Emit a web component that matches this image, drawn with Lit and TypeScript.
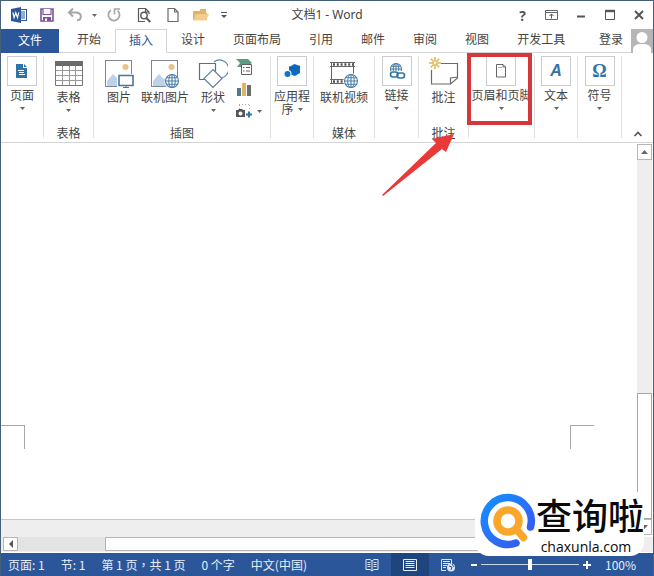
import { LitElement, html, css, svg, nothing, TemplateResult } from "lit";
import { customElement } from "lit/decorators.js";
import { classMap } from "lit/directives/class-map.js";

const draw = (w: number, h: number, body: TemplateResult) =>
  html`<svg width=${w} height=${h} viewBox="0 0 ${w} ${h}" fill="none" aria-hidden="true">${body}</svg>`;

const caret = html`<svg class="caret" width="5" height="3" viewBox="0 0 5 3" aria-hidden="true"><path d="M0 0h5L2.5 3z" fill="#666" /></svg>`;

const globe = (cx: number, cy: number, r: number) => svg`
  <g stroke="#4d7ea5" stroke-width="1.1">
    <circle cx=${cx} cy=${cy} r=${r} fill="#fff" />
    <ellipse cx=${cx} cy=${cy} rx=${r / 2} ry=${r} />
    <path d="M${cx} ${cy - r}v${2 * r}M${cx - r} ${cy}h${2 * r}M${cx - r * 0.85} ${cy - r / 2}h${r * 1.7}M${cx - r * 0.85} ${cy + r / 2}h${r * 1.7}" />
  </g>`;

const photo = svg`
  <rect x="1.5" y="4.5" width="26" height="26" fill="#fff" stroke="#7d8791" />
  <circle cx="21.500" cy="11" r="3" fill="#eac282" />
  <path d="M3 30V25l6-7 5 5 3-2v9z" fill="#bdd2e8" />`;

const icons = {
  word: draw(18, 18, svg`
    <rect x="9.500" y="3.500" width="7" height="11" fill="#fff" stroke="#2b579a" />
    <path d="M10 6h5M10 8h5M10 10h5M10 12h5" stroke="#2b579a" />
    <path d="M1 3l10-2v16L1 15z" fill="#2b579a" />
    <path d="M2.800 6.300l1.300 5.400 1.700-5 1.700 5 1.300-5.400" stroke="#fff" stroke-width="1.200" />`),
  save: draw(16, 16, svg`
    <path d="M2 2h12v12H2z" stroke="#7e539b" stroke-width="1.600" />
    <path d="M4 2v5.500h8V2" stroke="#7e539b" stroke-width="1.200" fill="#fff" />
    <path d="M4 10h8v4H4z" fill="#7e539b" /><path d="M6 11.500h2V14H6z" fill="#fff" />`),
  undo: draw(18, 16, svg`
    <path d="M7 1.500L3 5.500l4 4M3.500 5.500H10c6 0 6.500 7 1 8" stroke="#a6a6a6" stroke-width="2" />`),
  redo: draw(16, 16, svg`
    <path d="M11.500 3.600A5.600 5.600 0 1 1 5 3.200" stroke="#a6a6a6" stroke-width="1.800" />
    <path d="M8.500 7.500V2h5.500" stroke="#a6a6a6" stroke-width="1.600" />`),
  preview: draw(16, 18, svg`
    <path d="M9 15.500H2.500v-13h7l3.500 3.500v2M9.500 2.500V6H13" stroke="#595959" stroke-width="1.200" />
    <circle cx="8" cy="9.500" r="3.200" stroke="#595959" stroke-width="1.400" />
    <path d="M10.300 12l4 4" stroke="#595959" stroke-width="2" />`),
  blank: draw(14, 16, svg`<path d="M2 1.500h6.500L12 5v9.500H2zM8.500 1.500V5H12" stroke="#6a6a6a" stroke-width="1.200" />`),
  folder: draw(18, 16, svg`
    <path d="M1 13V4h7V2h6v4h1v7z" fill="#e2b368" /><path d="M1 13.500L4 7h13l-3 6.500z" fill="#f3cd8b" />`),
  more: draw(8, 8, svg`<path d="M1 1.500h6" stroke="#555" /><path d="M1 4h6L4 7z" fill="#555" />`),
  ribbonMode: draw(14, 12, svg`
    <path d="M.5 1.500h12v9H.5zM.5 3.500h12" stroke="#666" /><path d="M6.500 9.500V5M4.500 7l2-2 2 2" stroke="#555" />`),
  min: draw(12, 12, svg`<path d="M2 7.500h8" stroke="#555" stroke-width="2" />`),
  max: draw(12, 12, svg`<path d="M1.500 2v8.500h9V2" stroke="#555" /><path d="M1 2h10" stroke="#555" stroke-width="2.400" />`),
  close: draw(12, 12, svg`<path d="M2 2l8 8M10 2l-8 8" stroke="#555" stroke-width="2" />`),
  person: draw(22, 24, svg`
    <path d="M0 0h22v24H0z" fill="#b6b6b8" /><circle cx="11" cy="8.500" r="5.500" fill="#fff" />
    <path d="M2 24v-3c0-5 4-6 9-6s9 1 9 6v3z" fill="#fff" />`),
  page: draw(12, 16, svg`
    <path d="M0 1h7v4h4v10H0z" fill="#2f74a8" /><path d="M8 1l3 3H8z" fill="#2f74a8" />
    <path d="M2 7.500h6M3 11.500h6" stroke="#fff" /><path d="M3 9.500h5" stroke="#fff" />`),
  table: draw(30, 32, svg`
    <path d="M1.500 6.500h27v23h-27z" fill="#fff" stroke="#777" /><path d="M1 5h28v5H1z" fill="#6b6b6b" />
    <path d="M2 14.500h26M2 19.500h26M2 24.500h26M8.500 10v19M15.500 10v19M21.500 10v19" stroke="#9a9a9a" />`),
  picture: draw(30, 32, svg`${photo}
    <path d="M13 18h17v14H13z" fill="#fff" />
    <path d="M15 19.500h14v10H15z" fill="#fff" stroke="#47779f" stroke-width="1.600" /><path d="M22 29v2M19 31.500h6" stroke="#47779f" />`),
  online: draw(30, 32, svg`${photo}<circle cx="22" cy="26" r="7.500" fill="#fff" />${globe(22, 25, 6.5)}`),
  shapes: draw(30, 32, svg`
    <path d="M16 6A9 9 0 1 1 22 22" stroke="#5b87ab" stroke-width="1.200" />
    <path d="M1.500 7.500h16v16h-16z" fill="#fff" stroke="#47779f" stroke-width="1.200" />
    <path d="M15 13.500l9 9-9 9-9-9z" fill="#fff" stroke="#6b8299" stroke-width="1.200" />`),
  smartart: draw(18, 18, svg`
    <path d="M1 1h12l4 4-3 2H7v2H2l3-4z" fill="#5c9c80" />
    <path d="M6.500 6.500h10v10h-10z" fill="#fff" stroke="#606060" /><path d="M8 9.500h1.500M8 13h1.500M11 9.500h4M11 13h4" stroke="#606060" />`),
  chart: draw(18, 16, svg`
    <path d="M2 7h4v8H2z" fill="#4c7896" /><path d="M7 2h4v13H7z" fill="#e2b161" /><path d="M12 4h4v11h-4z" fill="#6d6d6d" />`),
  screenshot: draw(18, 16, svg`
    <path d="M4 1.500h11M4.500 2v4M14.500 2v5" stroke="#aaa" stroke-dasharray="1 2" />
    <path d="M1 7h2l1-1h3l1 1h2v7H1z" fill="#555" /><circle cx="5.500" cy="10.500" r="2" fill="#fff" />
    <path d="M11 11.500h6M14 8.500v6" stroke="#2f74a8" stroke-width="2" />`),
  apps: draw(18, 16, svg`
    <path d="M6 4l5.500-3L17 3v7l-5 3-6-2z" fill="#0f6cbd" /><path d="M6 4l6 2 5-3" stroke="#0a5aa5" />
    <circle cx="4.500" cy="11" r="4" fill="#fff" /><circle cx="4.500" cy="11" r="3" fill="#1273c8" />`),
  video: draw(30, 32, svg`
    <path d="M2.500 6v22M24.500 6v12M1 10.500h25M1 23.500h14" stroke="#666" />
    <path d="M1 6.500h25M1 27.500h14" stroke="#666" /><path d="M4 8.500h21M4 25.500h12" stroke="#555" stroke-width="2.400" stroke-dasharray="2 1.800" />
    <circle cx="22" cy="25" r="7.800" fill="#fff" />${globe(22, 25, 6.5)}`),
  link: draw(18, 18, svg`${globe(8, 7, 5.5)}
    <path d="M3 9h14v8H3z" fill="#fff" />
    <rect x="2.500" y="10" width="7.500" height="5" rx="2.500" stroke="#2f74a8" stroke-width="1.600" />
    <rect x="9" y="11" width="7.500" height="5" rx="2.500" stroke="#2f74a8" stroke-width="1.600" />`),
  comment: draw(32, 32, svg`
    <path d="M13 7.500h16.500V22l-7 6H3.500V14" stroke="#6b6b6b" stroke-width="1.200" />
    <path d="M29.500 21l-7 1v6" stroke="#6b6b6b" stroke-width="1.200" />
    <path d="M7 1v4M7 9v4M1 7h4M9 7h4M2.800 2.800l2.500 2.500M8.700 8.700l2.500 2.500M11.200 2.800L8.700 5.300M5.300 8.700l-2.500 2.500" stroke="#dfb752" stroke-width="1.500" />
    <circle cx="7" cy="7" r="2" stroke="#dfb752" stroke-width="1.200" />`),
  header: draw(12, 16, svg`
    <path d="M1.500 1.500H8L10.500 4v10h-9zM8 1.500V4h2.500" stroke="#666" fill="#fff" /><path d="M3 4.500h4" stroke="#d9a54c" />`),
  read: draw(14, 14, svg`
    <path d="M7 3L5 1.500H1v10h4L7 13l2-1.500h4v-10H9zM7 3v10" stroke="#dce6f4" />
    <path d="M2.500 4.500h3M2.500 6.500h3M2.500 8.500h3M8.500 4.500h3M8.500 6.500h3M8.500 8.500h3" stroke="#dce6f4" />`),
  print: draw(14, 14, svg`
    <path d="M.5 1.500h13v11H.5z" stroke="#e6eef8" /><path d="M2.500 3.500h9M2.500 5.500h9M2.500 7.500h9M2.500 9.500h9" stroke="#e6eef8" />`),
  web: draw(16, 14, svg`
    <path d="M6 12.500H1.500v-11h10V6M3 3.500h7M3 5.500h7M3 7.500h4M3 9.500h3" stroke="#dce6f4" />
    <circle cx="11" cy="9.500" r="4" fill="#dce6f4" /><path d="M9 8l3 1-1 3M12 6l2 3" stroke="#2b579a" />`),
  collapse: draw(10, 8, svg`<path d="M1.500 6L5 2.500 8.500 6" stroke="#555" stroke-width="1.600" />`),
};

interface Cmd {
  label: string;
  icon: TemplateResult;
  boxed?: boolean;
  arrow?: boolean;
  size?: string;
}
interface Group {
  name?: string;
  size: string;
  cmds: Cmd[];
  small?: { label: string; icon: TemplateResult; arrow?: boolean }[];
  mark?: boolean;
}

const groups: Group[] = [
  { size: "w43", cmds: [{ label: "页面", icon: icons.page, boxed: true, arrow: true }] },
  { size: "w50", name: "表格", cmds: [{ label: "表格", icon: icons.table, arrow: true }] },
  {
    size: "w177",
    name: "插图",
    cmds: [
      { label: "图片", icon: icons.picture, size: "c40" },
      { label: "联机图片", icon: icons.online, size: "c52" },
      { label: "形状", icon: icons.shapes, arrow: true, size: "c44" },
    ],
    small: [
      { label: "SmartArt", icon: icons.smartart },
      { label: "图表", icon: icons.chart },
      { label: "屏幕截图", icon: icons.screenshot, arrow: true },
    ],
  },
  { size: "w43", cmds: [{ label: "应用程序", icon: icons.apps, boxed: true, arrow: true, size: "wrap" }] },
  { size: "w61", name: "媒体", cmds: [{ label: "联机视频", icon: icons.video }] },
  { size: "w44", cmds: [{ label: "链接", icon: icons.link, boxed: true, arrow: true }] },
  { size: "w50", name: "批注", cmds: [{ label: "批注", icon: icons.comment }] },
  { size: "w66", mark: true, cmds: [{ label: "页眉和页脚", icon: icons.header, boxed: true, arrow: true }] },
  { size: "w43", cmds: [{ label: "文本", icon: html`<i class="glyph">A</i>`, boxed: true, arrow: true }] },
  { size: "w44", cmds: [{ label: "符号", icon: html`<b class="glyph omega">Ω</b>`, boxed: true, arrow: true }] },
];

const reset = css`
  :host, * { box-sizing: border-box; }
  button {
    border: 0;
    padding: 0;
    margin: 0;
    background: none;
    font: inherit;
    color: inherit;
    display: flex;
    align-items: center;
    justify-content: center;
  }
  svg { display: block; flex: none; }
`;

@customElement("word-titlebar")
class WordTitlebar extends LitElement {
  static styles = [reset, css`
    :host { display: grid; grid-template-columns: 1fr auto 1fr; height: 28px; align-items: center; color: #444; }
    .bar { display: flex; align-items: center; }
    .bar button { width: 28px; height: 26px; }
    .quick { padding-left: 4px; }
    .quick .narrow { width: 10px; }
    .quick .wide { width: 30px; }
    .quick .end { width: 18px; }
    .win { justify-content: flex-end; }
    .win button { width: 29px; }
    .help { font: bold 14px "Open Sans", sans-serif; color: #555; }
    .title { margin: 0; font-size: 12px; font-weight: 400; font-family: "Noto Sans", "Noto Sans CJK SC", sans-serif; }
  `];
  render() {
    return html`
      <div class="bar quick">
        <button aria-label="Word">${icons.word}</button>
        <button aria-label="保存">${icons.save}</button>
        <button aria-label="撤消">${icons.undo}</button>
        <button class="narrow" aria-label="撤消列表">${caret}</button>
        <button class="wide" aria-label="重复">${icons.redo}</button>
        <button class="wide" aria-label="打印预览">${icons.preview}</button>
        <button aria-label="新建">${icons.blank}</button>
        <button aria-label="打开">${icons.folder}</button>
        <button class="end" aria-label="自定义">${icons.more}</button>
      </div>
      <h1 class="title">文档1 - Word</h1>
      <div class="bar win">
        <button class="help" aria-label="帮助">?</button>
        <button aria-label="功能区显示选项">${icons.ribbonMode}</button>
        <button aria-label="最小化">${icons.min}</button>
        <button aria-label="最大化">${icons.max}</button>
        <button aria-label="关闭">${icons.close}</button>
      </div>`;
  }
}

@customElement("word-tabs")
class WordTabs extends LitElement {
  static styles = [reset, css`
    :host { display: flex; height: 24px; color: #444; border-bottom: 1px solid #d4d4d4; }
    .tab { padding: 0 14px 4px; height: 24px; white-space: nowrap; }
    .file { width: 58px; margin-right: 4px; background: #2b579a; color: #fff; padding-bottom: 2px; }
    .active { padding: 0 13px 4px; border: 1px solid #d4d4d4; border-bottom: 0; background: #fff; color: #2b579a; }
    .gap { flex: 1; }
    .login { padding-right: 8px; }
    .face { width: 22px; height: 24px; }
  `];
  render() {
    const tabs = ["开始", "插入", "设计", "页面布局", "引用", "邮件", "审阅", "视图", "开发工具"];
    return html`
      <button class="tab file">文件</button>
      ${tabs.map((t) => html`<button class=${classMap({ tab: true, active: t === "插入" })}>${t}</button>`)}
      <span class="gap"></span>
      <button class="tab login">登录</button>
      <button class="face" aria-label="帐户">${icons.person}</button>`;
  }
}

@customElement("word-ribbon")
class WordRibbon extends LitElement {
  static styles = [reset, css`
    :host { display: flex; height: 90px; padding: 3px 0 4px; color: #444; border-bottom: 1px solid #d4d4d4; background: #fff; }
    .group { position: relative; flex: none; display: flex; flex-direction: column; border-right: 1px solid #e1e1e1; }
    .w43 { width: 43px; }
    .w44 { width: 44px; }
    .w50 { width: 50px; }
    .w61 { width: 61px; }
    .w66 { width: 66px; }
    .w177 { width: 177px; }
    .row { display: flex; justify-content: center; flex: 1; }
    .w177 .row { justify-content: flex-start; padding-left: 5px; }
    .name { height: 16px; line-height: 16px; text-align: center; margin: 0 0 -3px; font-size: 12px; font-weight: 400; }
    .cmd { flex-direction: column; justify-content: flex-start; line-height: 16px; white-space: nowrap; height: 62px; }
    .label { margin-top: 1px; }
    .cmd .caret { margin-top: 4px; }
    .c40 { width: 40px; }
    .c52 { width: 52px; }
    .c44 { width: 44px; }
    .box { width: 30px; height: 30px; border: 1px solid #c9ced4; display: flex; align-items: center; justify-content: center; flex: none; }
    .wrap .label { width: 36px; white-space: normal; line-height: 13px; margin-top: 3px; }
    .wrap .caret { display: inline-block; margin: 0 0 3px 4px; }
    .minis { display: flex; flex-direction: column; }
    .mini { height: 22px; width: 30px; justify-content: flex-start; gap: 4px; }
    .glyph { font: italic bold 16px "Liberation Sans", sans-serif; color: #2f74a8; }
    .omega { font: bold 18px "Liberation Serif", serif; }
    .tail { flex: 1; display: flex; align-items: flex-end; justify-content: center; }
    .frame { position: absolute; left: -2px; top: -3px; width: 65px; height: 72px; border: 4px solid #d5373d; pointer-events: none; }
    .pointer { position: absolute; left: -88px; top: 76px; z-index: 2; pointer-events: none; }
  `];
  cmd(c: Cmd) {
    const wrap = c.size === "wrap";
    return html`<button class="cmd ${c.size ?? ""}">
      ${c.boxed ? html`<span class="box">${c.icon}</span>` : c.icon}
      <span class="label">${c.label}${wrap ? caret : nothing}</span>
      ${c.arrow && !wrap ? caret : nothing}
    </button>`;
  }
  render() {
    return html`
      ${groups.map((g) => html`
        <section class="group ${g.size}">
          <div class="row">
            ${g.cmds.map((c) => this.cmd(c))}
            ${g.small
              ? html`<div class="minis">${g.small.map((s) => html`<button class="mini" aria-label=${s.label}>${s.icon}${s.arrow ? caret : nothing}</button>`)}</div>`
              : nothing}
          </div>
          ${g.name ? html`<h2 class="name">${g.name}</h2>` : nothing}
          ${g.mark
            ? html`<div class="frame"></div>
                <svg class="pointer" width="76" height="66" viewBox="0 0 76 66" aria-hidden="true">
                  <path d="M1 63L55 11 51 7 73 2 65 20 61 17 2 64z" fill="#ea3a38" />
                </svg>`
            : nothing}
        </section>`)}
      <div class="tail"><button aria-label="折叠功能区">${icons.collapse}</button></div>`;
  }
}

@customElement("word-workspace")
class WordWorkspace extends LitElement {
  static styles = [reset, css`
    :host { display: flex; flex-direction: column; flex: 1; background: #fff; }
    .main { flex: 1; display: flex; }
    .sheet { flex: 1; display: flex; flex-direction: column; }
    .paper { flex: 1; display: flex; justify-content: space-between; align-items: flex-end; padding: 0 43px 70px 0; }
    .corner { width: 24px; height: 24px; border-top: 1px solid #a8a8a8; }
    .left { border-right: 1px solid #a8a8a8; }
    .right { border-left: 1px solid #a8a8a8; }
    .below { height: 18px; background: #eee; border-top: 1px solid #c6c6c6; }
    .vbar { width: 16px; display: flex; flex-direction: column; padding: 1px 1px 2px 0; background: #fff; }
    .arrow { width: 15px; height: 16px; border: 1px solid #b5b5b5; background: #fff; flex: none; }
    .vtrack { flex: 1; display: flex; flex-direction: column; justify-content: flex-end; background: #eee; }
    .vthumb { height: 35%; border: 1px solid #a8a8a8; background: #fff; }
    .hbar { height: 16px; display: flex; padding: 0 17px 1px 2px; background: #eee; border-bottom: 1px solid #fff; }
    .hbar .arrow { height: 14px; }
    .htrack { flex: 1; display: flex; justify-content: flex-end; background: #e3e3e3; }
    .hthumb { width: 86%; flex: none; border: 1px solid #b5b5b5; background: #fff; }
  `];
  render() {
    return html`
      <div class="main">
        <div class="sheet">
          <div class="paper"><div class="corner left"></div><div class="corner right"></div></div>
          <div class="below"></div>
        </div>
        <div class="vbar">
          <button class="arrow" aria-label="向上滚动">${draw(7, 4, svg`<path d="M0 4h7L3.500 0z" fill="#666" />`)}</button>
          <div class="vtrack"><div class="vthumb"></div></div>
          <button class="arrow" aria-label="向下滚动">${draw(7, 4, svg`<path d="M0 0h7L3.500 4z" fill="#666" />`)}</button>
        </div>
      </div>
      <div class="hbar">
        <button class="arrow" aria-label="向左滚动">${draw(4, 8, svg`<path d="M4 0v8L0 4z" fill="#555" />`)}</button>
        <div class="htrack"><div class="hthumb"></div></div>
      </div>`;
  }
}

@customElement("word-status")
class WordStatus extends LitElement {
  static styles = [reset, css`
    :host { display: flex; height: 23px; background: #2b579a; color: #e6eef8; padding: 0 18px 0 7px; align-items: center; white-space: nowrap; }
    .info { display: flex; gap: 16px; flex: 1; }
    .mid { font-family: "Noto Sans CJK TC", sans-serif; }
    .view { width: 38px; height: 23px; }
    .on { background: #1f457f; }
    .step { width: 14px; height: 20px; }
    .step.up { width: 16px; }
    .zoom { appearance: none; width: 98px; height: 16px; margin: 0; background: linear-gradient(#c9d6ea, #c9d6ea) center / 100% 1px no-repeat; }
    .zoom::-webkit-slider-thumb { appearance: none; width: 4px; height: 11px; background: #fff; }
    .pct { margin-left: 10px; width: 30px; }
  `];
  render() {
    return html`
      <div class="info">
        <span>页面: 1</span><span>节: 1</span>
        <span>第 1 页<span class="mid" lang="zh-TW">，</span>共 1 页</span>
        <span>0 个字</span><span>中文(中国)</span>
      </div>
      <button class="view" aria-label="阅读视图">${icons.read}</button>
      <button class="view on" aria-label="页面视图">${icons.print}</button>
      <button class="view" aria-label="Web 版式视图">${icons.web}</button>
      <button class="step" aria-label="缩小">${draw(8, 8, svg`<path d="M1 4h6" stroke="#fff" stroke-width="2" />`)}</button>
      <input class="zoom" type="range" min="0" max="100" value="50" aria-label="显示比例" />
      <button class="step up" aria-label="放大">${draw(8, 8, svg`<path d="M0 4h8M4 0v8" stroke="#fff" stroke-width="2" />`)}</button>
      <span class="pct">100%</span>`;
  }
}

@customElement("site-badge")
class SiteBadge extends LitElement {
  static styles = [reset, css`
    :host { display: flex; align-items: flex-start; padding: 0 0 0 5px; background: #fff; color: #0a0a0a; border-radius: 8px 8px 14px 14px; height: 64px; }
    .text { display: flex; flex-direction: column; align-items: center; padding-top: 5px; }
    .cn { font: 500 36px/42px "Liberation Sans", "Noto Sans CJK SC", sans-serif; }
    .url { font: 500 14px/16px "Open Sans", sans-serif; padding-right: 8px; }
  `];
  render() {
    return html`
      ${draw(56, 58, svg`
        <defs><linearGradient id="ring" x1="0" y1="0" x2="1" y2="1"><stop offset="0" stop-color="#1590ff" /><stop offset="1" stop-color="#3a55f0" /></linearGradient></defs>
        <path d="M36 51A23.500 23.500 0 1 1 50.500 35" stroke="url(#ring)" stroke-width="7.500" stroke-linecap="round" />
        <circle cx="28" cy="29" r="11" stroke="#f9a72b" stroke-width="7.500" />
        <path d="M37 38l6.500 7.500" stroke="#f9a72b" stroke-width="7.500" stroke-linecap="round" />`)}
      <div class="text"><span class="cn">查询啦</span><span class="url">chaxunla.com</span></div>`;
  }
}

@customElement("app-root")
class AppRoot extends LitElement {
  static styles = css`
    :host {
      display: flex;
      flex-direction: column;
      position: relative;
      box-sizing: border-box;
      min-height: 100vh;
      overflow: hidden;
      border: 1px solid #46607a;
      border-bottom: 0;
      background: #fff;
      font: 12px/16px "Noto Sans CJK SC", sans-serif;
    }
    .badge { position: absolute; right: 9px; bottom: 20px; }
  `;
  render() {
    return html`
      <word-titlebar></word-titlebar>
      <word-tabs></word-tabs>
      <word-ribbon></word-ribbon>
      <word-workspace></word-workspace>
      <word-status></word-status>
      <site-badge class="badge"></site-badge>`;
  }
}
